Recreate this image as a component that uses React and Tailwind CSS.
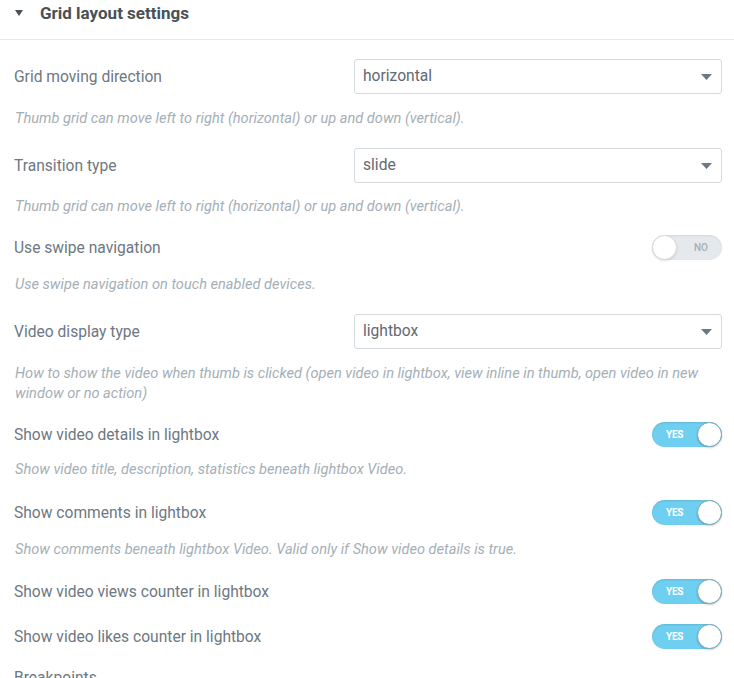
// Grid layout settings — Elementor-style control panel section
import React from 'react';

const LABEL = 'text-[15.6px] leading-5 text-[#6d7882]';
const DESC = 'text-[14.6px] leading-5 italic text-[#a4afb7]';

function Select({ value }) {
  return (
    <div className="flex h-[35px] w-[368px] items-center justify-between rounded-[3px] border border-[#d5dadf] bg-white pl-[8px] pr-[8px]">
      <span className="text-[15.6px] text-[#5f6a73]">{value}</span>
      <svg width="11" height="6" viewBox="0 0 11 6" className="mr-[1px]">
        <path d="M0 0 L11 0 L5.5 6 Z" fill="#6d7882" />
      </svg>
    </div>
  );
}

function Switch({ on }) {
  if (on) {
    return (
      <div className="relative h-[25px] w-[70px] rounded-full bg-[#6fcff1] shadow-[inset_0_1px_2px_rgba(0,0,0,0.12)]">
        <span className="absolute left-[14px] top-0 text-[10px] font-bold leading-[25px] tracking-[-0.3px] text-white">YES</span>
        <span className="absolute right-0 top-0 h-[25px] w-[25px] rounded-full border border-[#7aa7b8] bg-white shadow-[0_1px_2px_rgba(0,0,0,0.2)]" />
      </div>
    );
  }
  return (
    <div className="relative h-[25px] w-[70px] rounded-full bg-[#e6e9ec] shadow-[inset_0_1px_2px_rgba(0,0,0,0.08)]">
      <span className="absolute right-[14px] top-0 text-[10px] font-medium leading-[25px] text-[#a4afb7]">NO</span>
      <span className="absolute left-0 top-0 h-[25px] w-[25px] rounded-full border border-[#d5dadf] bg-white shadow-[0_1px_2px_rgba(0,0,0,0.12)]" />
    </div>
  );
}

function Row({ label, children, className = '' }) {
  return (
    <div className={`flex items-center justify-between ${className}`}>
      <span className={LABEL}>{label}</span>
      {children}
    </div>
  );
}

export default function App() {
  return (
    <div
      className="h-[678px] w-[734px] overflow-hidden bg-white"
      style={{ fontFamily: 'Roboto, "Liberation Sans", sans-serif' }}
    >
      <div className="flex h-[40px] items-start border-b border-[#e6e9ec] pl-[15px] pt-[2px]">
        <svg width="8" height="6" viewBox="0 0 8 6" className="mt-[8px]">
          <path d="M0 0 L8 0 L4 6 Z" fill="#495157" />
        </svg>
        <span className="ml-[17px] text-[17px] font-bold leading-[22px] text-[#495157]">Grid layout settings</span>
      </div>

      <div className="pl-[14px] pr-[12px]">
        <Row label="Grid moving direction" className="mt-[19px]">
          <Select value="horizontal" />
        </Row>
        <p className={`${DESC} mt-[14px] pl-[1px]`}>
          Thumb grid can move left to right (horizontal) or up and down (vertical).
        </p>

        <Row label="Transition type" className="mt-[20px]">
          <Select value="slide" />
        </Row>
        <p className={`${DESC} mt-[13px] pl-[1px]`}>
          Thumb grid can move left to right (horizontal) or up and down (vertical).
        </p>

        <Row label="Use swipe navigation" className="mt-[19px]">
          <Switch on={false} />
        </Row>
        <p className={`${DESC} mt-[14px] pl-[1px]`}>Use swipe navigation on touch enabled devices.</p>

        <Row label="Video display type" className="mt-[20px]">
          <Select value="lightbox" />
        </Row>
        <p className={`${DESC} mt-[14px] pl-[1px] pr-[6px]`}>
          How to show the video when thumb is clicked (open video in lightbox, view inline in thumb, open video in new
          window or no action)
        </p>

        <Row label="Show video details in lightbox" className="mt-[19px]">
          <Switch on />
        </Row>
        <p className={`${DESC} mt-[12px] pl-[1px]`}>
          Show video title, description, statistics beneath lightbox Video.
        </p>

        <Row label="Show comments in lightbox" className="mt-[21px]">
          <Switch on />
        </Row>
        <p className={`${DESC} mt-[14px] pl-[1px]`}>
          Show comments beneath lightbox Video. Valid only if Show video details is true.
        </p>

        <Row label="Show video views counter in lightbox" className="mt-[20px]">
          <Switch on />
        </Row>

        <Row label="Show video likes counter in lightbox" className="mt-[20px]">
          <Switch on />
        </Row>

        <p className={`${LABEL} mt-[19px]`}>Breakpoints</p>
      </div>
    </div>
  );
}
